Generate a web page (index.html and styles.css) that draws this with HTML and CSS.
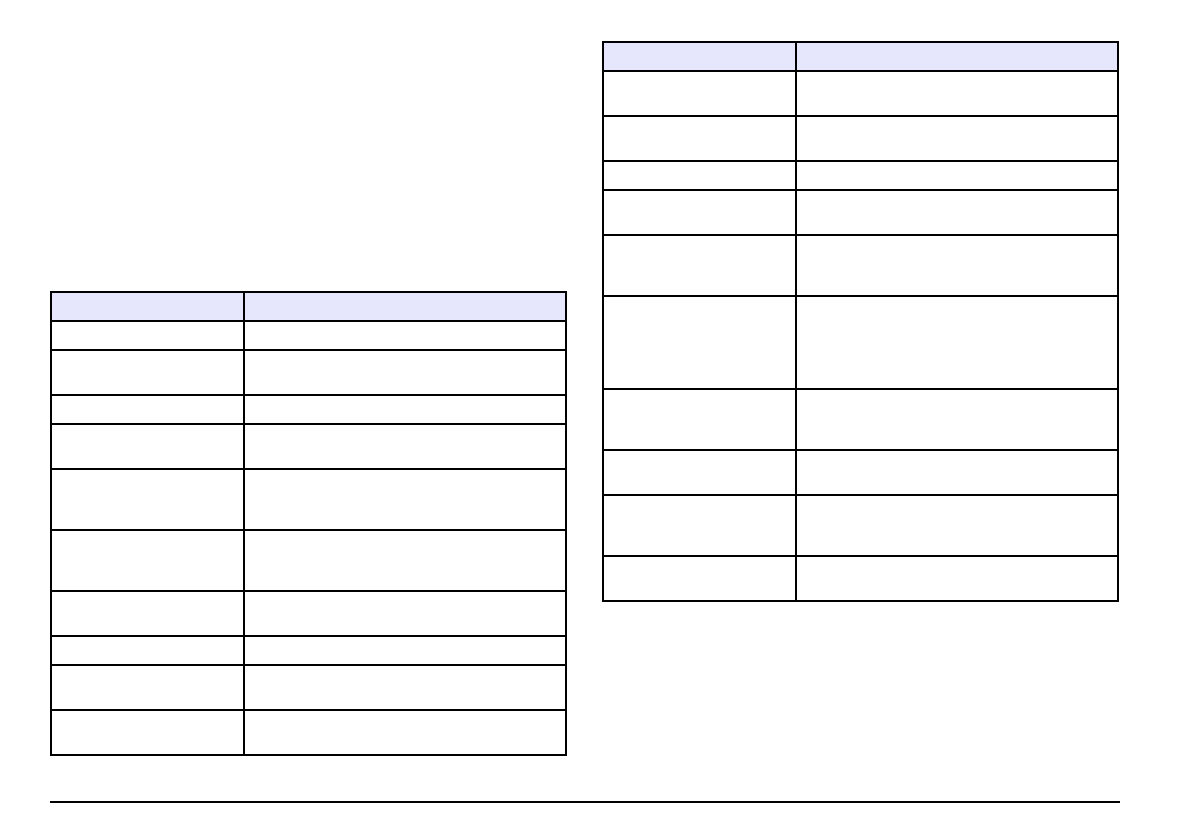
FILE: index.html
```html
<!DOCTYPE html>
<html lang="en">
<head>
<meta charset="utf-8">
<title>Tables</title>
<link rel="stylesheet" href="styles.css">
</head>
<body>
<div class="page">
  <div class="columns">
    <div class="col col-left">
      <table class="grid">
        <colgroup><col class="c1"><col class="c2"></colgroup>
        <thead><tr class="h"><th></th><th></th></tr></thead>
        <tbody>
          <tr class="r1"><td></td><td></td></tr>
          <tr class="r2"><td></td><td></td></tr>
          <tr class="r1"><td></td><td></td></tr>
          <tr class="r2"><td></td><td></td></tr>
          <tr class="r3"><td></td><td></td></tr>
          <tr class="r3"><td></td><td></td></tr>
          <tr class="r2"><td></td><td></td></tr>
          <tr class="r1"><td></td><td></td></tr>
          <tr class="r2"><td></td><td></td></tr>
          <tr class="r2"><td></td><td></td></tr>
        </tbody>
      </table>
    </div>
    <div class="col col-right">
      <table class="grid">
        <colgroup><col class="c1"><col class="c2"></colgroup>
        <thead><tr class="h"><th></th><th></th></tr></thead>
        <tbody>
          <tr class="r2"><td></td><td></td></tr>
          <tr class="r2"><td></td><td></td></tr>
          <tr class="r1"><td></td><td></td></tr>
          <tr class="r2"><td></td><td></td></tr>
          <tr class="r3"><td></td><td></td></tr>
          <tr class="r5"><td></td><td></td></tr>
          <tr class="r3"><td></td><td></td></tr>
          <tr class="r2"><td></td><td></td></tr>
          <tr class="r3"><td></td><td></td></tr>
          <tr class="r2"><td></td><td></td></tr>
        </tbody>
      </table>
    </div>
  </div>
  <footer class="footer"></footer>
</div>
</body>
</html>
```

FILE: styles.css
```css
html, body {
  margin: 0;
  padding: 0;
  background: #ffffff;
  font-family: "Liberation Sans", Arial, sans-serif;
  font-size: 12px;
  color: #000;
}

.page {
  width: 1192px;
  height: 840px;
  display: flex;
  flex-direction: column;
}

.columns {
  display: flex;
  gap: 35px;
  padding: 0 74px 0 50px;
  height: 801px;
}

.col {
  width: 517px;
}

.col-left {
  padding-top: 291px;
}

.col-right {
  padding-top: 41px;
}

.grid {
  width: 517px;
  border-collapse: collapse;
  table-layout: fixed;
  border: 2px solid #000;
}

.grid .c1 {
  width: 193px;
}

.grid th,
.grid td {
  border: 2px solid #000;
  padding: 0;
}

.grid th {
  background: #e6e6fc;
}

.grid .h { height: 29px; }
.grid .r1 { height: 29px; }
.grid .r2 { height: 45px; }
.grid .r3 { height: 61px; }
.grid .r5 { height: 93px; }

.footer {
  margin: 0 72px 0 50px;
  border-top: 2px solid #000;
}
```
